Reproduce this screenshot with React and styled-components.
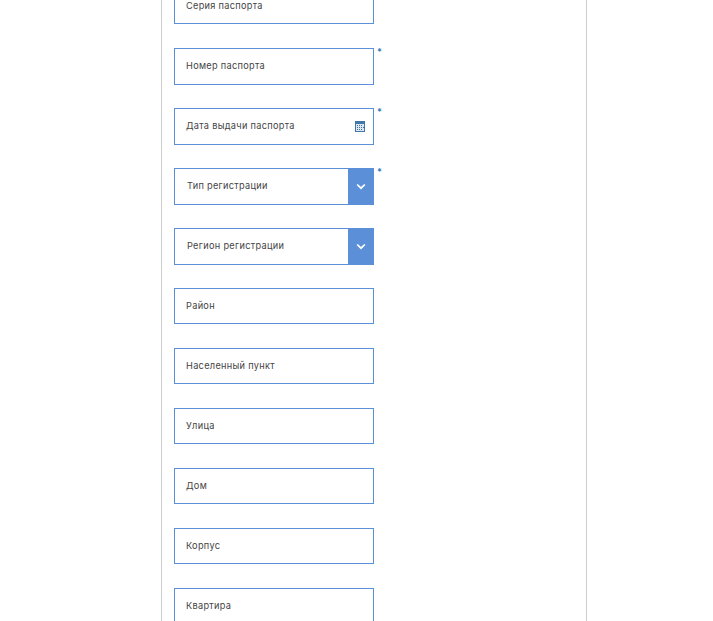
import React from "react";
import styled, { createGlobalStyle } from "styled-components";

const GlobalStyle = createGlobalStyle`
  html, body {
    margin: 0;
    padding: 0;
    background: #fff;
    font-family: "Inter", "Liberation Sans", sans-serif;
  }
`;

const Viewport = styled.div`
  height: 621px;
  overflow: hidden;
`;

const Panel = styled.div`
  box-sizing: border-box;
  width: 426px;
  margin: -12px 0 0 161px;
  padding: 0 0 0 12px;
  border-left: 1px solid #ccc;
  border-right: 1px solid #ccc;
`;

const Row = styled.div`
  display: flex;
  align-items: flex-start;
  height: 60px;
`;

const Field = styled.div`
  box-sizing: border-box;
  display: flex;
  align-items: center;
  justify-content: space-between;
  width: 200px;
  height: ${(p) => (p.$tall ? 37 : 36)}px;
  padding: 0 8px 2px 11px;
  border: 1px solid #5b90d8;
  color: #444;
  font-size: 9.2px;
  letter-spacing: 0.3px;
`;

const Select = styled.div`
  box-sizing: border-box;
  display: flex;
  align-items: center;
  width: 200px;
  height: 37px;
  border: 1px solid #5b90d8;
  border-right: none;
  color: #444;
  font-size: 9.2px;
  letter-spacing: 0.3px;
`;

const SelectLabel = styled.span`
  flex: 1;
  padding: 0 0 2px 12px;
`;

const SelectButton = styled.span`
  display: flex;
  align-items: center;
  justify-content: center;
  align-self: stretch;
  width: 26px;
  margin: -1px 0;
  background: #5b90d8;
`;

const Star = styled.span`
  margin: 0 0 0 3px;
  color: #3a7ab8;
  font-size: 9px;
  font-weight: 700;
  line-height: 8px;
`;

const CalendarSvg = styled.svg`
  margin-top: 2px;
`;

const CalendarIcon = () => (
  <CalendarSvg width="10" height="11" viewBox="0 0 10 11">
    <rect x="0" y="0" width="10" height="11" fill="#3f78a8" />
    <rect x="1" y="3" width="8" height="7" fill="#dce6ef" />
    <path
      d="M2 4h1v1H2zM4 4h1v1H4zM6 4h1v1H6zM2 6h1v1H2zM4 6h1v1H4zM6 6h1v1H6zM8 6h1v1H8zM2 8h1v1H2zM4 8h1v1H4zM6 8h1v1H6z"
      fill="#3f78a8"
    />
  </CalendarSvg>
);

const ChevronIcon = () => (
  <svg width="10" height="7" viewBox="0 0 10 7">
    <path d="M1.2 1.5 5 5.2 8.8 1.5" fill="none" stroke="#fff" strokeWidth="1.7" />
  </svg>
);

const fields = [
  { label: "Серия паспорта" },
  { label: "Номер паспорта", tall: true, required: true },
  { label: "Дата выдачи паспорта", tall: true, required: true, calendar: true },
  { label: "Тип регистрации", select: true, required: true },
  { label: "Регион регистрации", select: true },
  { label: "Район" },
  { label: "Населенный пункт" },
  { label: "Улица" },
  { label: "Дом" },
  { label: "Корпус" },
  { label: "Квартира" },
];

const App = () => {
  return (
    <Viewport>
      <GlobalStyle />
      <Panel>
        {fields.map((f) => (
          <Row key={f.label}>
            {f.select ? (
              <Select>
                <SelectLabel>{f.label}</SelectLabel>
                <SelectButton>
                  <ChevronIcon />
                </SelectButton>
              </Select>
            ) : (
              <Field $tall={f.tall}>
                {f.label}
                {f.calendar && <CalendarIcon />}
              </Field>
            )}
            {f.required && <Star>*</Star>}
          </Row>
        ))}
      </Panel>
    </Viewport>
  );
};

export default App;
